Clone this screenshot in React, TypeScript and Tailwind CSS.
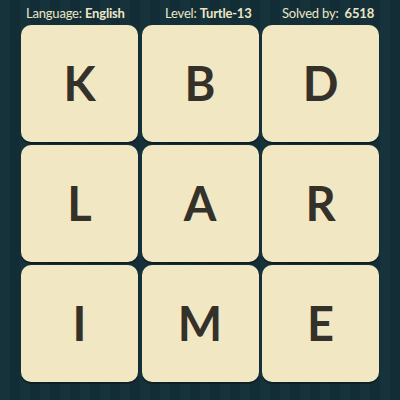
export default function App() {
  const letters = ["K", "B", "D", "L", "A", "R", "I", "M", "E"];

  return (
    <div
      className="w-[400px] h-[400px] overflow-hidden bg-[repeating-linear-gradient(90deg,#16323b_0px,#16323b_10px,#132d36_10px,#132d36_20px)] text-[#ece6c6]"
      style={{ fontFamily: "Lato, 'Open Sans', sans-serif" }}
    >
      {/* header */}
      <div className="h-[25px] flex items-center justify-between pl-[26px] pr-[26px] text-[13px] leading-none pt-[1px]">
        <div className="tracking-[-0.2px]">
          Language: <span className="font-bold">English</span>
        </div>
        <div className="ml-[10px] tracking-[-0.2px]">
          Level: <span className="font-bold">Turtle-13</span>
        </div>
        <div className="tracking-[-0.2px]">
          Solved by: <span className="font-bold ml-[3px]">6518</span>
        </div>
      </div>

      {/* board */}
      <div className="ml-[21px] w-[358px] grid grid-cols-3 gap-x-[3.5px] gap-y-[3px]">
        {letters.map((l) => (
          <div
            key={l}
            className="h-[117px] rounded-[10px] bg-[#f1e8c3] shadow-[0_2px_1px_rgba(0,0,0,0.35)] flex items-center justify-center"
          >
            <span className="text-[47px] font-bold text-[#34302a] leading-none">
              {l}
            </span>
          </div>
        ))}
      </div>
    </div>
  );
}
